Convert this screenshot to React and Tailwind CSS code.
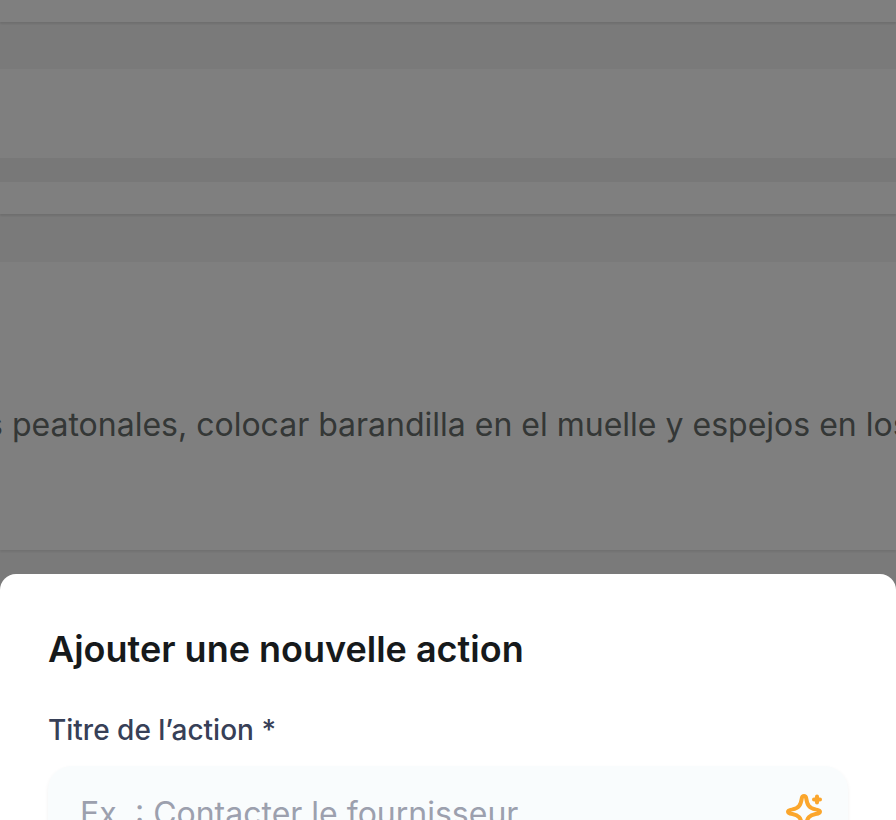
function SparkleIcon() {
  return (
    <svg
      aria-hidden="true"
      viewBox="0 2 40 40"
      className="size-10"
      fill="none"
      stroke="currentColor"
      strokeWidth="4"
      strokeLinecap="round"
      strokeLinejoin="round"
    >
      <path d="M20 4c-1.300 0-1.900.8-2.200 2.200-1 7-3.100 10-9.400 11.200C6.600 17.700 4 18.200 4 19.700s2.600 2 4.400 2.300c6.300 1.200 8.400 3.700 9.400 10.200.3 1.400.9 2.200 2.200 2.200s1.900-.8 2.200-2.200c1-6.500 3.100-9 9.400-10.200 1.800-.3 4.400-.8 4.400-2.300s-2.600-2-4.400-2.300c-6.300-1.200-8.400-4.200-9.400-11.200C21.900 4.800 21.300 4 20 4Z" />
      <path d="M33 4.500v6M30 7.500h6" />
    </svg>
  );
}

function Page() {
  return (
    <main className="min-h-screen overflow-hidden bg-[#f5f5f5]">
      <section className="h-[22px] bg-white shadow-[0_2px_2px_rgba(0,0,0,0.1)]" />
      <section className="mt-[47px] h-[89px] bg-white" />
      <div className="h-6 bg-[#f0f0f0]" />
      <section className="h-8 bg-white shadow-[0_2px_2px_rgba(0,0,0,0.1)]" />
      <section className="mt-12 flex h-[288px] items-center bg-white pt-[38px] shadow-[0_2px_2px_rgba(0,0,0,0.08)]">
        <p className="-ml-3.5 whitespace-nowrap text-[32px] leading-10 text-[#686e6c]">
          s peatonales, colocar barandilla en el muelle y espejos en los
        </p>
      </section>
    </main>
  );
}

function ActionDialog() {
  return (
    <div className="fixed inset-0 flex flex-col justify-end bg-black/50">
      <div
        role="dialog"
        aria-modal="true"
        aria-labelledby="dialog-title"
        className="h-[30vh] overflow-hidden rounded-t-2xl bg-white px-12 pt-14"
      >
        <h2 id="dialog-title" className="text-4xl font-semibold leading-[38px] text-[#16191b]">
          Ajouter une nouvelle action
        </h2>
        <label
          htmlFor="action-title"
          className="mt-[42px] block text-[28px] font-medium leading-10 text-[#374057]"
        >
          Titre de l’action *
        </label>
        <div className="mt-4 flex h-24 items-center rounded-3xl bg-[#f9fcfd] pl-8 pr-6 shadow-[0_2px_4px_rgba(0,0,0,0.06)]">
          <input
            id="action-title"
            type="text"
            placeholder="Ex. : Contacter le fournisseur"
            className="min-w-0 flex-1 bg-transparent text-[32px] leading-10 outline-none placeholder:text-[#9ca0ae]"
          />
          <button type="button" aria-label="Suggérer un titre" className="text-[#fba62c]">
            <SparkleIcon />
          </button>
        </div>
      </div>
    </div>
  );
}

export default function App() {
  return (
    <div className="font-['Inter',sans-serif]">
      <Page />
      <ActionDialog />
    </div>
  );
}
